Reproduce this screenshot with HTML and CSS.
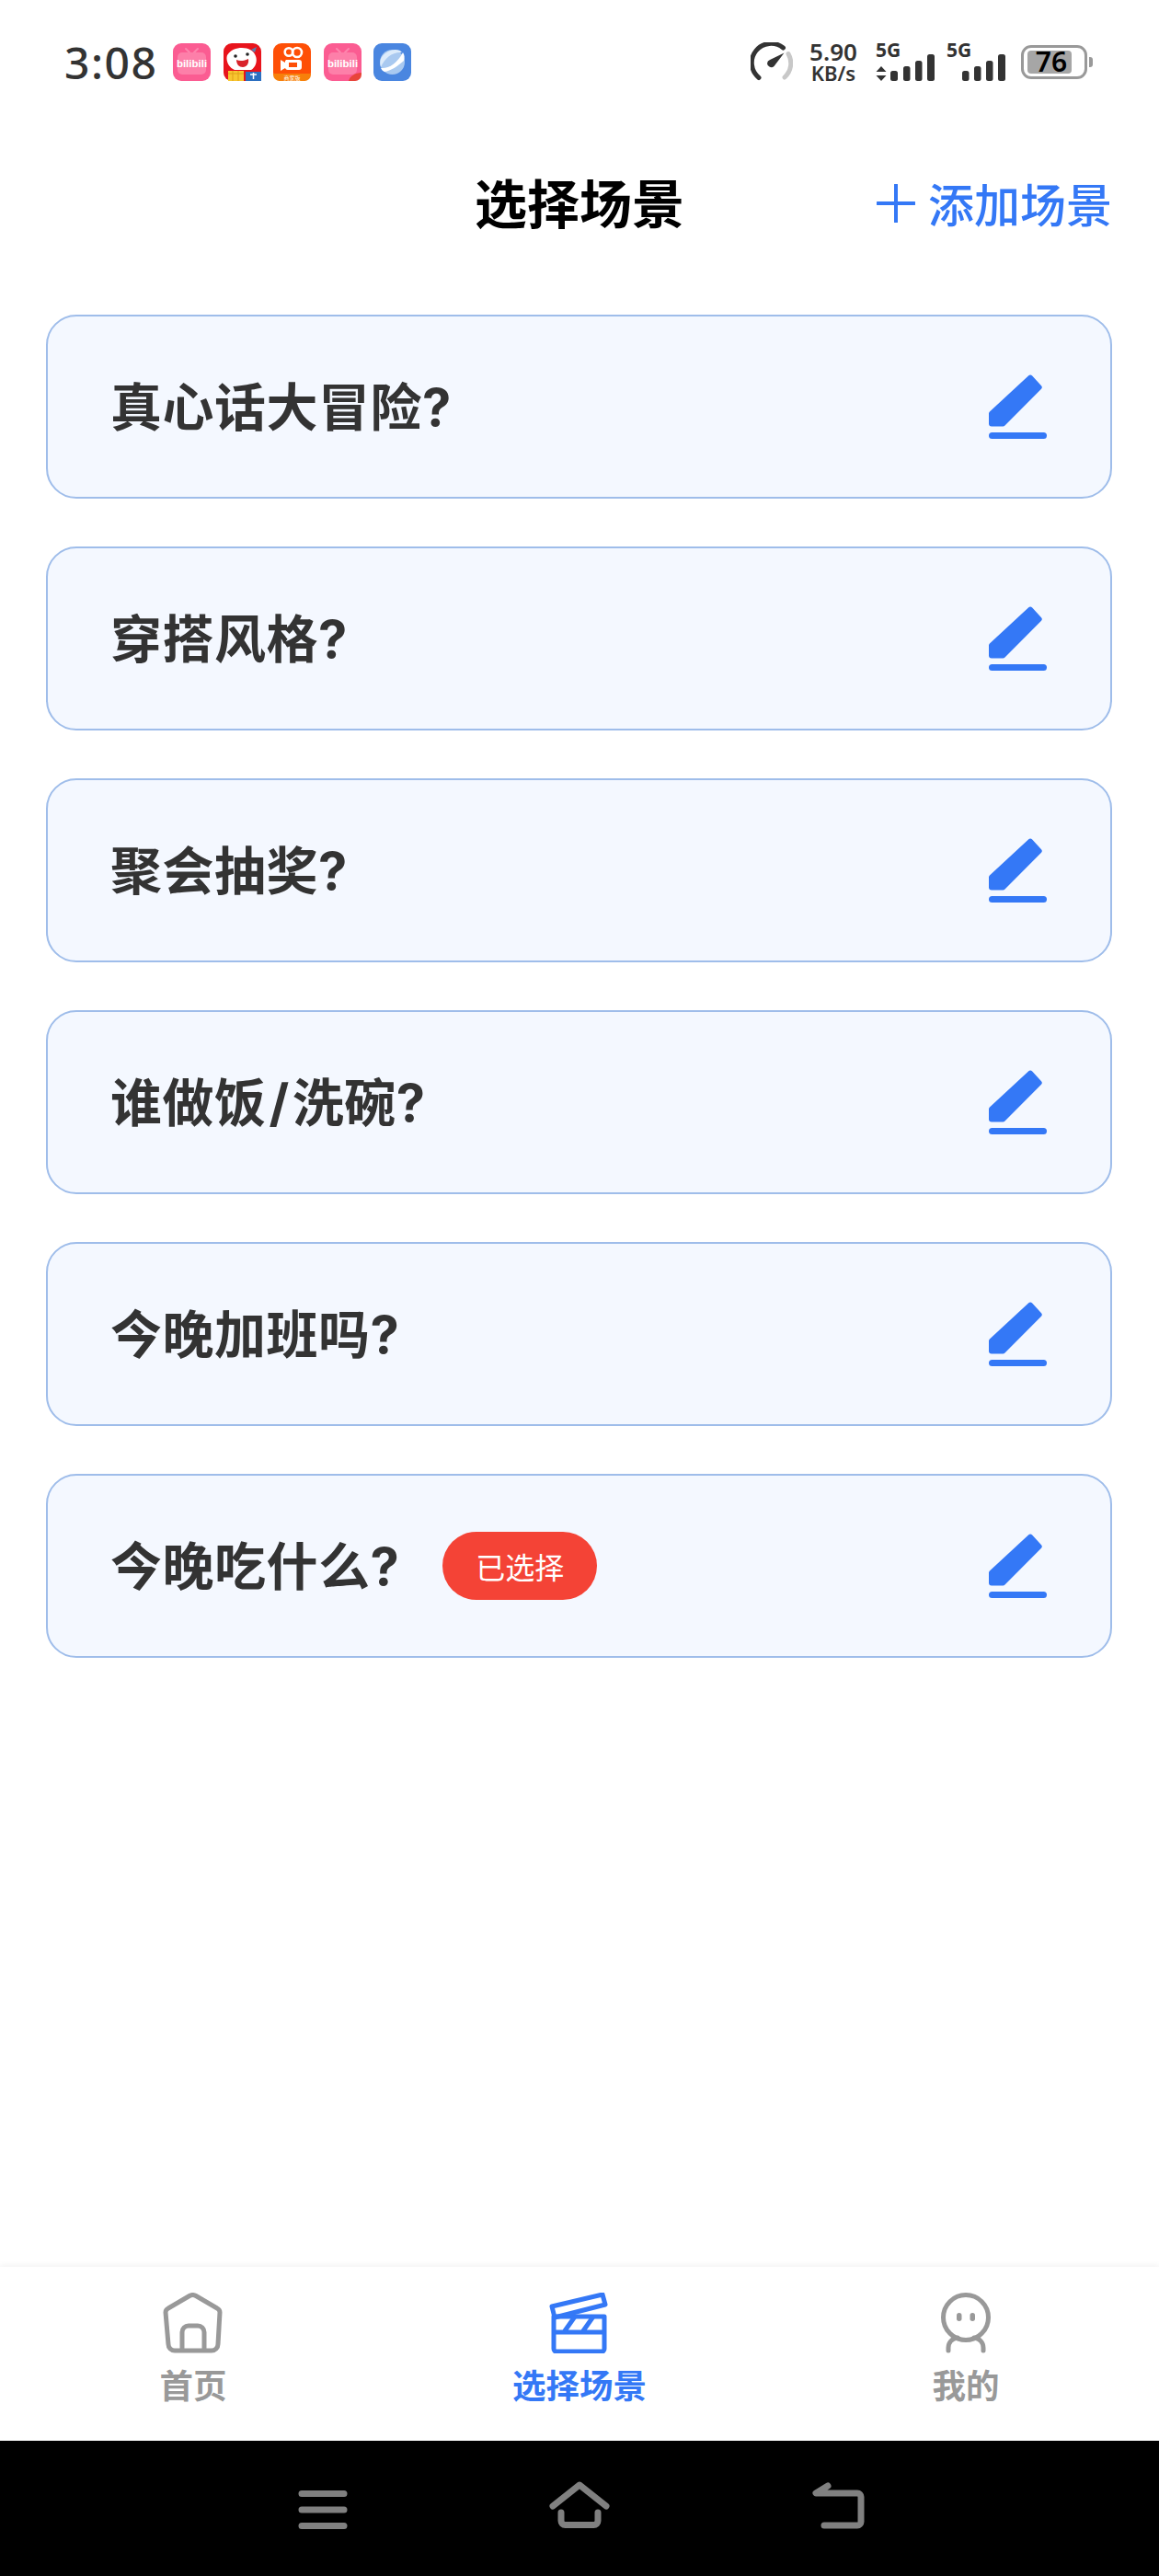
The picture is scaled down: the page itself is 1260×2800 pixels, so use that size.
FILE: index.html
```html
<!DOCTYPE html>
<html lang="zh-CN">
<head>
    <meta charset="UTF-8">
    <meta name="viewport" content="width=device-width, initial-scale=1.0">
    <title>选择场景</title>
    <link rel="stylesheet" href="styles.css">
</head>
<body>
    <svg class="defs" width="0" height="0">
        <symbol id="pen" viewBox="0 0 64 70">
            <path d="M43 1.500a3 3 0 0 1 4.200 0l9.600 10.400a3 3 0 0 1 0 4.200L17.500 55.500a3 3 0 0 1-2.200 1H3a3 3 0 0 1-3-3V42.500a3 3 0 0 1 .9-2.100z" fill="#3478f6"/>
            <rect x="0" y="63" width="63" height="7" rx="3.500" fill="#3478f6"/>
        </symbol>
    </svg>

    <div class="status-bar">
        <div class="status-left">
            <span class="clock">3:08</span>
            <div class="app-icons">
                <svg class="app-icon" viewBox="0 0 41 41">
                    <rect width="41" height="41" rx="9" fill="#fb5c92"/>
                    <path d="M14 6l4 4M27 6l-4 4" stroke="#fd86ae" stroke-width="2" stroke-linecap="round"/>
                    <rect x="5" y="10" width="31" height="24" rx="5" fill="#fd7fa9"/>
                    <text x="20.500" y="26" text-anchor="middle" class="bili-text">bilibili</text>
                </svg>
                <svg class="app-icon" viewBox="0 0 41 41">
                    <rect width="41" height="41" rx="9" fill="#e8141c"/>
                    <path d="M4 13c4-6 10-8 16-8 7 0 13 3 15 9 2 5 0 12-5 15H12C6 27 2 19 4 13z" fill="#fff"/>
                    <path d="M14 18c4 2 9 1 13-1 1 5-2 9-6 9s-7-3-7-8z" fill="#d8232a"/>
                    <circle cx="13" cy="14" r="1.800" fill="#222"/>
                    <circle cx="26" cy="12" r="1.800" fill="#222"/>
                    <path d="M30 7l6-3-2 6z" fill="#5a7fb0"/>
                    <rect x="5" y="30" width="17" height="11" fill="#f8c630"/>
                    <rect x="24" y="31" width="17" height="10" fill="#2c6fc0"/>
                    <path d="M5 33h17M10 30v11M16 30v11" stroke="#e09f18" stroke-width="1"/>
                    <path d="M29 34h7M32.500 32v7" stroke="#fff" stroke-width="1.500"/>
                </svg>
                <svg class="app-icon" viewBox="0 0 41 41">
                    <rect width="41" height="41" rx="9" fill="#fe4f06"/>
                    <path d="M0 33h41v1a7 7 0 0 1-7 7H7a7 7 0 0 1-7-7z" fill="#f7800a"/>
                    <circle cx="17" cy="9.500" r="4.300" fill="none" stroke="#fff" stroke-width="2.600"/>
                    <circle cx="26" cy="10" r="5" fill="none" stroke="#fff" stroke-width="2.600"/>
                    <path d="M14 18h14a3 3 0 0 1 3 3v5a3 3 0 0 1-3 3H16a3 3 0 0 1-3-2l-5 3V18l5 3a3 3 0 0 1 1-3z" fill="#fff"/>
                    <path d="M17 21h9v5h-9z" fill="#fe4f06"/>
                    <text x="20.500" y="39.500" text-anchor="middle" class="ks-text">商家版</text>
                </svg>
                <svg class="app-icon" viewBox="0 0 41 41">
                    <rect width="41" height="41" rx="9" fill="#fb5c92"/>
                    <path d="M14 6l4 4M27 6l-4 4" stroke="#fd86ae" stroke-width="2" stroke-linecap="round"/>
                    <rect x="5" y="10" width="31" height="24" rx="5" fill="#fd7fa9"/>
                    <text x="20.500" y="26" text-anchor="middle" class="bili-text">bilibili</text>
                    <path d="M41 32v2a7 7 0 0 1-7 7h-7c1-5 7-9 14-9z" fill="#e8443a"/>
                </svg>
                <svg class="app-icon" viewBox="0 0 41 41">
                    <rect width="41" height="41" rx="9" fill="#4a86e0"/>
                    <circle cx="20.500" cy="20.500" r="13.500" fill="#a9c9f0"/>
                    <path d="M8 26C12 16 21 9 31 10l-2-2C22 5 12 9 8 17c-1 3-1 6 0 9z" fill="#dcebfb"/>
                    <path d="M8 27c8 1 18-5 24-17 2 3 2 6 1 9-7 6-14 11-21 12-2-1-3-2-4-4z" fill="#fff"/>
                </svg>
            </div>
        </div>
        <div class="status-right">
            <svg class="gauge" viewBox="0 0 46 42">
                <path d="M9 38.500A20.500 20.500 0 0 1 35.500 6" fill="none" stroke="#333" stroke-width="5" stroke-linecap="round"/>
                <path d="M41 12.500a20.500 20.500 0 0 1-4 25.500" fill="none" stroke="#c8c8c8" stroke-width="5" stroke-linecap="round"/>
                <path d="M36.500 11.500L21 19a4.500 4.500 0 0 0-3 4 4.500 4.500 0 0 0 7.500 3z" fill="#333"/>
            </svg>
            <div class="speed">
                <span class="speed-num">5.90</span>
                <span class="speed-unit">KB/s</span>
            </div>
            <svg class="signal signal-first" viewBox="0 -9 65 60">
                <text x="0" y="16" class="sig-text">5G</text>
                <path d="M6 26l5.500 6H.5zM6 42l5.500-6H.5z" fill="#333"/>
                <rect x="16" y="31" width="8" height="11" rx="2.500" fill="#333"/>
                <rect x="30" y="26" width="7.500" height="16" rx="2.500" fill="#333"/>
                <rect x="43" y="20" width="7.500" height="22" rx="2.500" fill="#333"/>
                <rect x="56" y="13" width="8" height="29" rx="2.500" fill="#333"/>
            </svg>
            <svg class="signal signal-second" viewBox="0 -9 64 60">
                <text x="0" y="16" class="sig-text">5G</text>
                <rect x="17" y="31" width="7.500" height="11" rx="2.500" fill="#333"/>
                <rect x="30" y="26" width="7.500" height="16" rx="2.500" fill="#333"/>
                <rect x="43" y="20" width="7.500" height="22" rx="2.500" fill="#333"/>
                <rect x="56" y="13" width="8" height="29" rx="2.500" fill="#333"/>
            </svg>
            <div class="battery">
                <div class="battery-body">
                    <div class="battery-fill"></div>
                    <span class="battery-num">76</span>
                </div>
                <div class="battery-tip"></div>
            </div>
        </div>
    </div>

    <div class="header">
        <span></span>
        <h1 class="page-title">选择场景</h1>
        <a class="add-btn">
            <svg class="add-icon" viewBox="0 0 42 42"><path d="M21 1v40M1 21h40" stroke="#3478f6" stroke-width="4" stroke-linecap="round"/></svg>
            <span class="add-text">添加场景</span>
        </a>
    </div>

    <div class="scene-list">
        <div class="scene-card">
            <div class="scene-name">真心话大冒险?</div>
            <svg class="edit-icon"><use href="#pen"/></svg>
        </div>
        <div class="scene-card">
            <div class="scene-name">穿搭风格?</div>
            <svg class="edit-icon"><use href="#pen"/></svg>
        </div>
        <div class="scene-card">
            <div class="scene-name">聚会抽奖?</div>
            <svg class="edit-icon"><use href="#pen"/></svg>
        </div>
        <div class="scene-card">
            <div class="scene-name">谁做饭<span class="slash">/</span>洗碗?</div>
            <svg class="edit-icon"><use href="#pen"/></svg>
        </div>
        <div class="scene-card">
            <div class="scene-name">今晚加班吗?</div>
            <svg class="edit-icon"><use href="#pen"/></svg>
        </div>
        <div class="scene-card">
            <div class="scene-name">今晚吃什么?</div>
            <span class="badge">已选择</span>
            <svg class="edit-icon"><use href="#pen"/></svg>
        </div>
    </div>

    <div class="tab-bar">
        <div class="tab-item">
            <svg class="tab-icon" viewBox="0 0 66 66">
                <path d="M29 3.500a7 7 0 0 1 7 0l23 13.500a5 5 0 0 1 3 4.500L60 56a7 7 0 0 1-7 7H13a7 7 0 0 1-7-7L3 21.500A5 5 0 0 1 6 17z" fill="none" stroke="#999" stroke-width="5"/>
                <path d="M21 63V43a7 7 0 0 1 7-7h10a7 7 0 0 1 7 7v20" fill="none" stroke="#999" stroke-width="5"/>
            </svg>
            <span>首页</span>
        </div>
        <div class="tab-item active">
            <svg class="tab-icon" viewBox="0 0 66 66">
                <path d="M5 26h55v35a3 3 0 0 1-3 3H8a3 3 0 0 1-3-3z" fill="none" stroke="#3478f6" stroke-width="5" stroke-linejoin="round"/>
                <path d="M5 43h55M16 43l12-17M36 43l12-17" fill="none" stroke="#3478f6" stroke-width="5"/>
                <path d="M3 15L58 2l3 11L6 27z" fill="none" stroke="#3478f6" stroke-width="5" stroke-linejoin="round"/>
            </svg>
            <span>选择场景</span>
        </div>
        <div class="tab-item">
            <svg class="tab-icon" viewBox="0 0 66 66">
                <ellipse cx="33" cy="27" rx="24.500" ry="24.500" fill="none" stroke="#999" stroke-width="5"/>
                <path d="M14 63v-3c0-6 4-10 10-11M52 63v-3c0-6-4-10-10-11" fill="none" stroke="#999" stroke-width="5" stroke-linecap="round"/>
                <rect x="23" y="22" width="5.500" height="9" rx="2.700" fill="#999"/>
                <rect x="37.500" y="22" width="5.500" height="9" rx="2.700" fill="#999"/>
            </svg>
            <span>我的</span>
        </div>
    </div>

    <div class="nav-bar">
        <svg class="nav-icon" width="54" height="42" viewBox="0 0 54 42">
            <path d="M4 3.500h46M4 21h46M4 38.500h46" stroke="#808080" stroke-width="7" stroke-linecap="round"/>
        </svg>
        <svg class="nav-icon" width="68" height="52" viewBox="0 0 68 52">
            <path d="M5 27L34 4l29 23" fill="none" stroke="#808080" stroke-width="7" stroke-linecap="round" stroke-linejoin="round"/>
            <path d="M14 34v9a4.500 4.500 0 0 0 4.500 4.500h31a4.500 4.500 0 0 0 4.500-4.500v-9" fill="none" stroke="#808080" stroke-width="7" stroke-linecap="round"/>
        </svg>
        <svg class="nav-icon" width="60" height="52" viewBox="0 0 60 52">
            <path d="M18 5L5 13h45a4 4 0 0 1 4 4v27a4 4 0 0 1-4 4H14" fill="none" stroke="#808080" stroke-width="7" stroke-linecap="round" stroke-linejoin="round"/>
        </svg>
    </div>
</body>
</html>
```

FILE: styles.css
```css
* {
    box-sizing: border-box;
}

body {
    display: flex;
    flex-direction: column;
    height: 100vh;
    margin: 0;
    font-family: "Noto Sans CJK SC", "Noto Sans", sans-serif;
    background-color: #fff;
}

.defs {
    position: absolute;
}

.bili-text {
    font: bold 11.500px "Liberation Sans", sans-serif;
    fill: #fff;
}

.ks-text {
    font: 6px "Noto Sans CJK SC", sans-serif;
    fill: #fff;
}

.sig-text {
    font: bold 21px "Noto Sans", sans-serif;
    fill: #333;
}

/* status bar */
.status-bar {
    display: flex;
    justify-content: space-between;
    align-items: center;
    height: 134px;
    padding: 0 72px 0 70px;
    flex-shrink: 0;
}

.status-left,
.status-right {
    display: flex;
    align-items: center;
}

.clock {
    font-family: "Noto Sans", sans-serif;
    font-size: 48px;
    font-weight: 500;
    letter-spacing: 1.500px;
    color: #333;
    width: 118px;
}

.app-icons {
    display: flex;
    gap: 13.500px;
}

.app-icon {
    width: 41px;
    height: 41px;
}

.gauge {
    width: 46px;
    height: 42px;
    margin-right: 18px;
}

.speed {
    display: flex;
    flex-direction: column;
    align-items: center;
    width: 52px;
    margin-right: 20px;
    font-family: "Noto Sans", sans-serif;
    font-weight: 600;
    color: #333;
}

.speed-num {
    font-size: 26px;
    line-height: 24px;
}

.speed-unit {
    font-size: 22px;
    line-height: 22px;
}

.signal {
    height: 60px;
}

.signal-first {
    width: 65px;
    margin-right: 12px;
}

.signal-second {
    width: 64px;
    margin-right: 17px;
}

.battery {
    display: flex;
    align-items: center;
}

.battery-body {
    position: relative;
    display: flex;
    align-items: center;
    justify-content: center;
    width: 72px;
    height: 37px;
    border: 3px solid #999;
    border-radius: 11px;
}

.battery-fill {
    position: absolute;
    left: 4px;
    top: 3px;
    bottom: 3px;
    width: 48px;
    border-radius: 4px;
    background-color: #a6a6a6;
}

.battery-num {
    position: relative;
    font-family: "Noto Sans", sans-serif;
    font-size: 30px;
    font-weight: 600;
    line-height: 30px;
    color: #000;
    margin-left: -6px;
}

.battery-tip {
    width: 4px;
    height: 11px;
    margin-left: 2px;
    border-radius: 0 3px 3px 0;
    background-color: #999;
}

/* header */
.header {
    display: grid;
    grid-template-columns: 1fr auto 1fr;
    align-items: center;
    height: 174px;
    padding: 0 51px 0 51px;
    flex-shrink: 0;
}

.page-title {
    margin: 0;
    padding-bottom: 6px;
    font-size: 57px;
    font-weight: 700;
    color: #000;
}

.add-btn {
    display: flex;
    align-items: center;
    justify-content: flex-end;
    gap: 14px;
    font-size: 50px;
    font-weight: 500;
    color: #3478f6;
}

.add-text {
    padding-bottom: 3px;
}

.add-icon {
    width: 42px;
    height: 42px;
}

/* scene cards */
.scene-list {
    display: flex;
    flex-direction: column;
    gap: 52px;
    flex: 1;
    padding: 34px 51px 0 50px;
}

.scene-card {
    display: flex;
    align-items: center;
    height: 200px;
    padding: 0 68px 0 68px;
    border: 2px solid #9fbdea;
    border-radius: 33px;
    background-color: #f4f8ff;
}

.scene-name {
    padding-bottom: 8px;
    font-family: Inter, "Noto Sans CJK SC", sans-serif;
    font-size: 56px;
    font-weight: 700;
    letter-spacing: 0.500px;
    color: #333;
}

.slash {
    margin: 0 3px;
}

.badge {
    display: flex;
    align-items: center;
    justify-content: center;
    width: 168px;
    height: 74px;
    margin-left: 47px;
    border-radius: 37px;
    font-size: 32px;
    color: #fff;
    background-color: #f44336;
}

.edit-icon {
    width: 64px;
    height: 70px;
    margin-left: auto;
}

/* bottom tabs */
.tab-bar {
    display: flex;
    height: 189px;
    flex-shrink: 0;
    box-shadow: 0 -2px 6px rgba(0, 0, 0, 0.05);
}

.tab-item {
    display: flex;
    flex-direction: column;
    align-items: center;
    flex: 1;
    padding-top: 28px;
    font-size: 36.500px;
    font-weight: 700;
    line-height: 52px;
    color: #999;
}

.tab-item.active {
    color: #3478f6;
}

.tab-icon {
    width: 66px;
    height: 66px;
    margin-bottom: 8px;
}

/* system nav */
.nav-bar {
    display: flex;
    align-items: flex-end;
    justify-content: center;
    gap: 218px;
    height: 147px;
    padding: 0 0 51px 6px;
    flex-shrink: 0;
    background-color: #000;
}

.nav-icon {
    display: block;
}
```
